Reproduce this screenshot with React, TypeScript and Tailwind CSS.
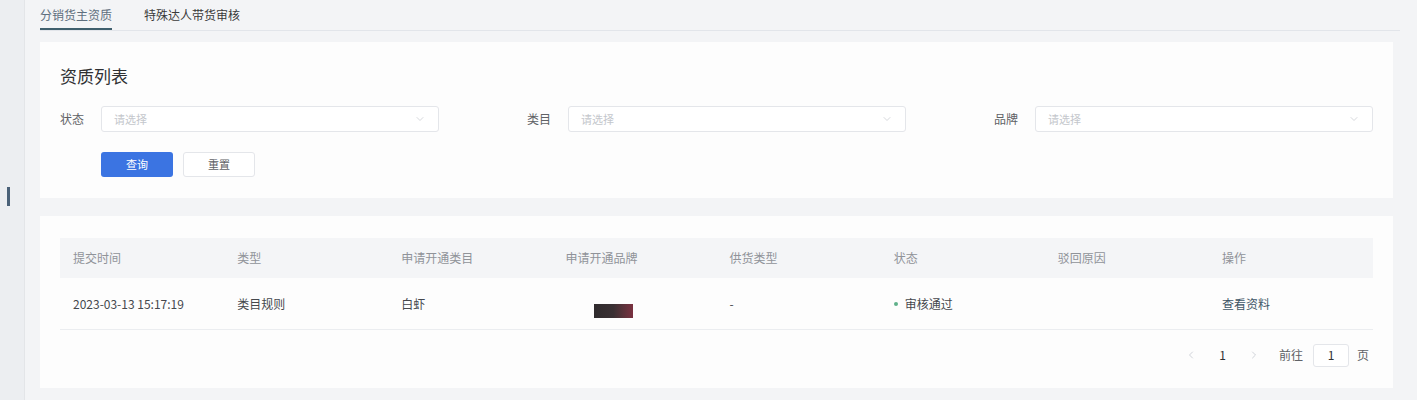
import { ChevronDown, ChevronLeft, ChevronRight } from "lucide-react";

const font = { fontFamily: '"Noto Sans CJK SC", "Noto Sans", sans-serif' };

const columns = ["提交时间", "类型", "申请开通类目", "申请开通品牌", "供货类型", "状态", "驳回原因", "操作"];

function FilterSelect({ label }: { label: string }) {
  return (
    <div className="flex items-center">
      <span className="w-[41px] text-[12px] text-[#606266]">{label}</span>
      <div className="flex-1 h-[26px] flex items-center justify-between px-[12px] border border-[#e4e6ea] rounded-[3px] bg-white">
        <span className="text-[11px] text-[#c4c7cc]">请选择</span>
        <ChevronDown className="w-[12px] h-[12px] text-[#c8cbd0]" strokeWidth={1.5} />
      </div>
    </div>
  );
}

export default function App() {
  return (
    <div className="flex w-full h-[400px] bg-[#f3f4f6] overflow-hidden" style={font}>
      <div className="w-[25px] shrink-0 bg-[#eceef1] border-r border-[#e3e5e8] pt-[187px] pl-[7px]">
        <div className="w-[3px] h-[19px] bg-[#4a6178]" />
      </div>

      <div className="flex-1 pl-[15px] pr-[24px]">
        <div className="flex h-[31px] border-b border-[#e2e5ea] gap-[32px] mr-[-7px]">
          <div className="whitespace-nowrap pt-[6px] text-[12px] text-[#5f6f7e] border-b-2 border-[#3f5f6d]">
            分销货主资质
          </div>
          <div className="whitespace-nowrap pt-[6px] text-[12px] text-[#3a3a3a]">特殊达人带货审核</div>
        </div>

        <div className="mt-[11px] bg-[#fdfdfd] px-[20px] pt-[21px] pb-[21px]">
          <div className="text-[17px] text-[#303133] leading-[26px]">资质列表</div>
          <div className="grid grid-cols-3 gap-x-[88px] mt-[17px]">
            <FilterSelect label="状态" />
            <FilterSelect label="类目" />
            <FilterSelect label="品牌" />
          </div>
          <div className="flex gap-[10px] mt-[20px] pl-[41px]">
            <button type="button" className="w-[72px] h-[25px] rounded-[3px] bg-[#3b74e2] text-white text-[11px]">
              查询
            </button>
            <button type="button" className="w-[72px] h-[25px] rounded-[3px] border border-[#e4e6ea] bg-white text-[#606266] text-[11px]">
              重置
            </button>
          </div>
        </div>

        <div className="mt-[18px] bg-[#fdfdfd] px-[20px] pt-[22px] h-[172px]">
          <div className="grid grid-cols-8 h-[40px] items-center bg-[#f4f5f7] text-[12px] text-[#909399]">
            {columns.map((c) => (
              <div key={c} className="pl-[13px]">{c}</div>
            ))}
          </div>
          <div className="grid grid-cols-8 h-[52px] items-center border-b border-[#ebedf0] text-[12px] text-[#45484d]">
            <div className="pl-[13px]">2023-03-13 15:17:19</div>
            <div className="pl-[13px]">类目规则</div>
            <div className="pl-[13px]">白虾</div>
            <div className="pl-[42px] pt-[14px]">
              <div className="w-[39px] h-[14px] bg-gradient-to-r from-[#2f2b2d] via-[#3a3033] to-[#7a3040]" />
            </div>
            <div className="pl-[13px]">-</div>
            <div className="pl-[13px] flex items-center gap-[7px]">
              <span className="w-[4px] h-[4px] rounded-full bg-[#5fb08a]" />
              审核通过
            </div>
            <div className="pl-[13px]" />
            <div className="pl-[13px] text-[#3e5566]">查看资料</div>
          </div>
          <div className="flex justify-end items-center h-[50px] text-[12px] text-[#606266] pr-[4px]">
            <ChevronLeft className="w-[12px] h-[12px] text-[#c0c4cc]" strokeWidth={1.5} />
            <span className="mx-[22px] text-[#303133]">1</span>
            <ChevronRight className="w-[12px] h-[12px] text-[#c0c4cc]" strokeWidth={1.5} />
            <span className="ml-[19px]">前往</span>
            <div className="ml-[10px] w-[36px] h-[23px] border border-[#e4e6ea] rounded-[3px] bg-white flex items-center justify-center text-[#303133]">
              1
            </div>
            <span className="ml-[8px]">页</span>
          </div>
        </div>
      </div>
    </div>
  );
}
